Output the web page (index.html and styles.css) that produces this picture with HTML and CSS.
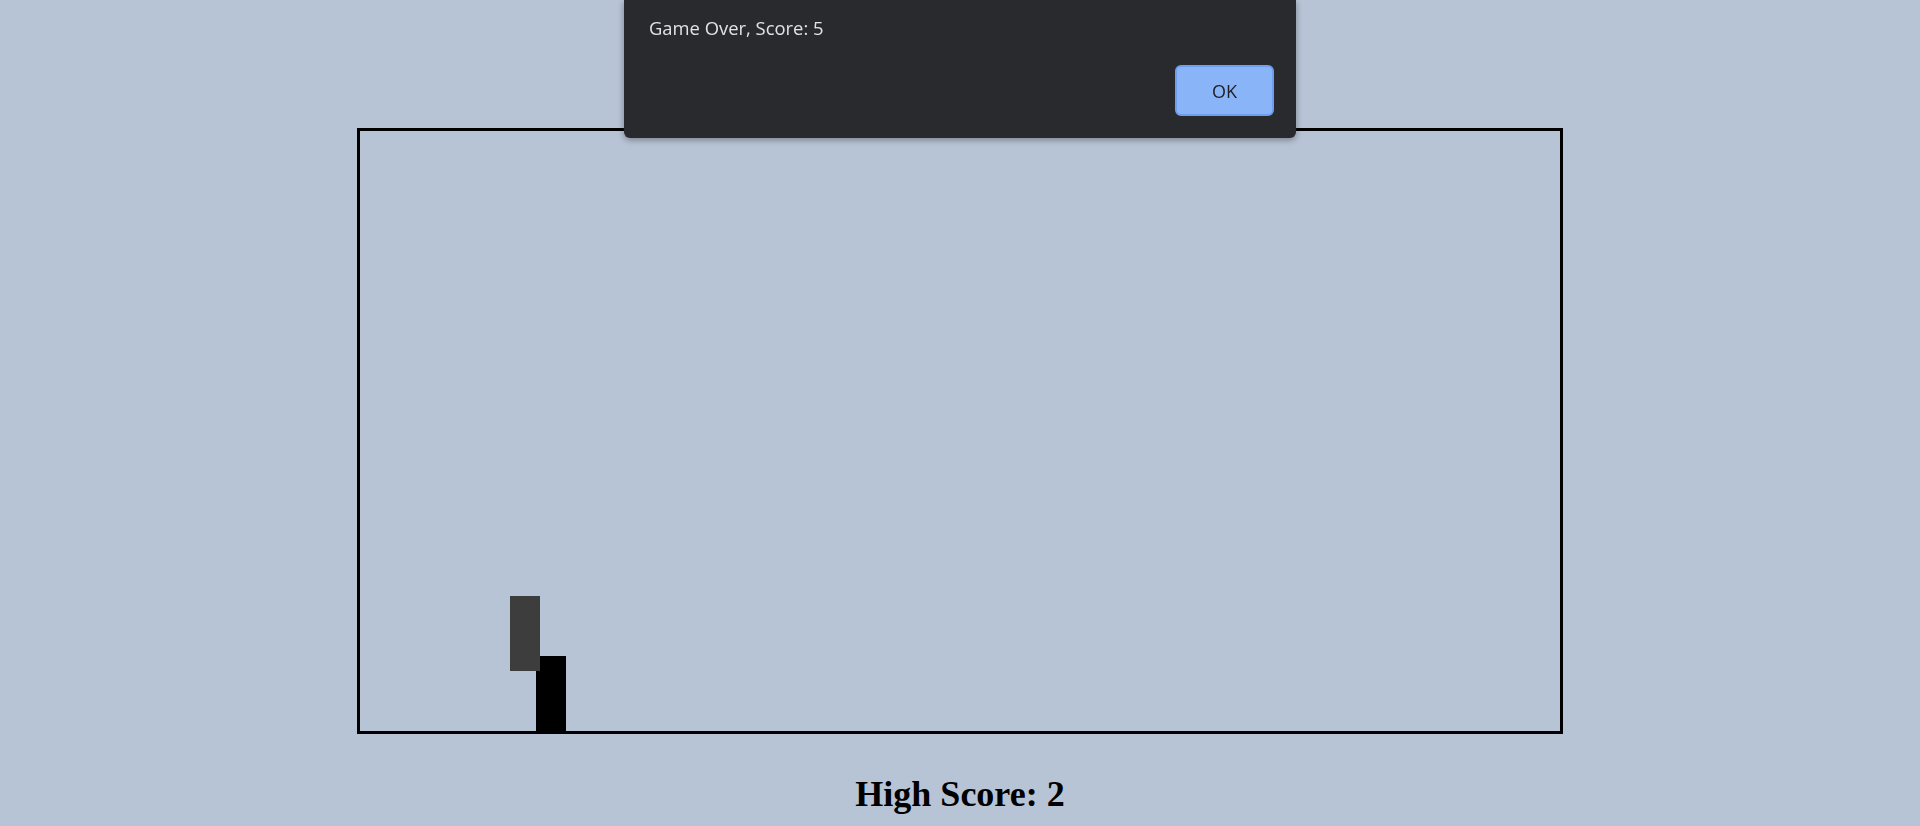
FILE: index.html
```html
<!DOCTYPE html>
<html>
<head>
<meta charset="utf-8">
<title>Game</title>
<link rel="stylesheet" href="styles.css">
</head>
<body>
<main class="page">
  <div class="game">
    <div class="block block-player"></div>
    <div class="block block-obstacle"></div>
  </div>
  <h1 class="high-score">High Score: 2</h1>
</main>
<div class="alert" role="alertdialog">
  <p class="alert-message">Game Over, Score: 5</p>
  <div class="alert-actions">
    <button class="alert-ok">OK</button>
  </div>
</div>
</body>
</html>
```
FILE: styles.css
```css
html, body {
  margin: 0;
  padding: 0;
  background: #b7c4d5;
  height: 100%;
  overflow: hidden;
}

.page {
  display: flex;
  flex-direction: column;
  align-items: center;
  padding-top: 128px;
}

.game {
  position: relative;
  width: 1200px;
  height: 600px;
  border: 3px solid #000;
}

.block {
  position: absolute;
  width: 30px;
  height: 75px;
}

.block-obstacle {
  left: 176px;
  top: 525px;
  background: #000;
}

.block-player {
  left: 150px;
  top: 465px;
  background: #3d3d3d;
  z-index: 1;
}

.high-score {
  margin: 40px 0 0;
  font-family: "Liberation Serif", "Times New Roman", serif;
  font-weight: bold;
  font-size: 36px;
  line-height: 41px;
  color: #000;
}

.alert {
  position: fixed;
  left: 624px;
  top: 0;
  width: 672px;
  height: 138px;
  box-sizing: border-box;
  padding: 16px 22px 22px 25px;
  background: #292a2e;
  border-radius: 0 0 6px 6px;
  box-shadow: 0 2px 6px rgba(0, 0, 0, 0.35), 0 0 0 1px rgba(255,255,255,0.04);
  display: flex;
  flex-direction: column;
  font-family: "Open Sans", "Noto Sans", sans-serif;
}

.alert-message {
  margin: 0;
  color: #e3e3e3;
  font-size: 18.4px;
  line-height: 24px;
}

.alert-actions {
  margin-top: auto;
  display: flex;
  justify-content: flex-end;
}

.alert-ok {
  width: 99px;
  height: 51px;
  box-sizing: border-box;
  border: 2px solid #6d9eef;
  border-radius: 6px;
  background: #8ab4f8;
  color: #202124;
  font-family: "Open Sans", "Noto Sans", sans-serif;
  font-size: 18px;
  padding: 0;
}
```
